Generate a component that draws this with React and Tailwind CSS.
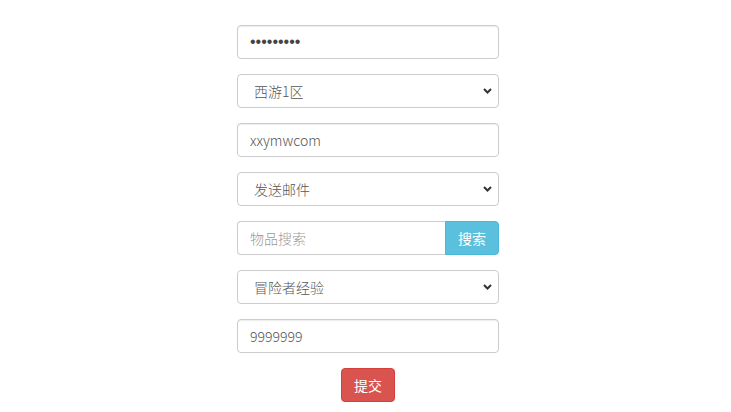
import { useState } from 'react';

const font = { fontFamily: '"Microsoft YaHei", "Noto Sans CJK SC", "Open Sans", sans-serif' };

const inputCls =
  'w-full h-[34px] px-3 text-[14px] font-light text-[#555] placeholder:text-[#999] bg-white border border-[#ccc] rounded-[4px] outline-none shadow-[inset_0_1px_1px_rgba(0,0,0,0.075)]';

const Select = ({ value, options, onChange }) => (
  <div className="relative w-full">
    <select
      value={value}
      onChange={(e) => onChange(e.target.value)}
      className="w-full h-[34px] pl-4 pr-8 text-[14px] font-light text-[#555] bg-white border border-[#ccc] rounded-[4px] outline-none appearance-none"
      style={font}
    >
      {options.map((o) => (
        <option key={o}>{o}</option>
      ))}
    </select>
    <svg
      className="absolute right-[7px] top-[14px] w-[9px] h-[6px] pointer-events-none"
      viewBox="0 0 9 6"
      fill="none"
      stroke="#333"
      strokeWidth="2"
    >
      <path d="M1 1l3.5 3.5L8 1" />
    </svg>
  </div>
);

const App = () => {
  const [server, setServer] = useState('西游1区');
  const [action, setAction] = useState('发送邮件');
  const [kind, setKind] = useState('冒险者经验');

  return (
    <div className="w-[731px] h-[412px] bg-white flex justify-center pl-[5px]" style={font}>
      <div className="w-[262px] pt-[25px] flex flex-col gap-[15px]">
        <input
          type="password"
          defaultValue="123456789"
          className={inputCls + ' !text-[16px] !text-[#444]'}
          style={{ fontFamily: '"Liberation Sans", Arial, sans-serif' }}
        />

        <Select value={server} options={['西游1区', '西游2区']} onChange={setServer} />

        <input type="text" defaultValue="xxymwcom" className={inputCls} style={font} />

        <Select value={action} options={['发送邮件', '发送物品']} onChange={setAction} />

        {/* 物品搜索 */}
        <div className="flex h-[34px]">
          <input
            type="text"
            placeholder="物品搜索"
            className="flex-1 min-w-0 h-[34px] px-3 text-[14px] font-light text-[#555] placeholder:text-[#999] bg-white border border-[#ccc] border-r-0 rounded-l-[4px] outline-none"
            style={font}
          />
          <button className="w-[54px] h-[34px] text-[14px] text-white bg-[#5bc0de] border border-[#46b8da] rounded-r-[4px]">
            搜索
          </button>
        </div>

        <Select value={kind} options={['冒险者经验', '金币']} onChange={setKind} />

        <input type="text" defaultValue="9999999" className={inputCls} style={font} />

        <div className="flex justify-center">
          <button className="w-[54px] h-[34px] text-[14px] text-white bg-[#d9534f] border border-[#d43f3a] rounded-[4px]">
            提交
          </button>
        </div>
      </div>
    </div>
  );
};

export default App;
